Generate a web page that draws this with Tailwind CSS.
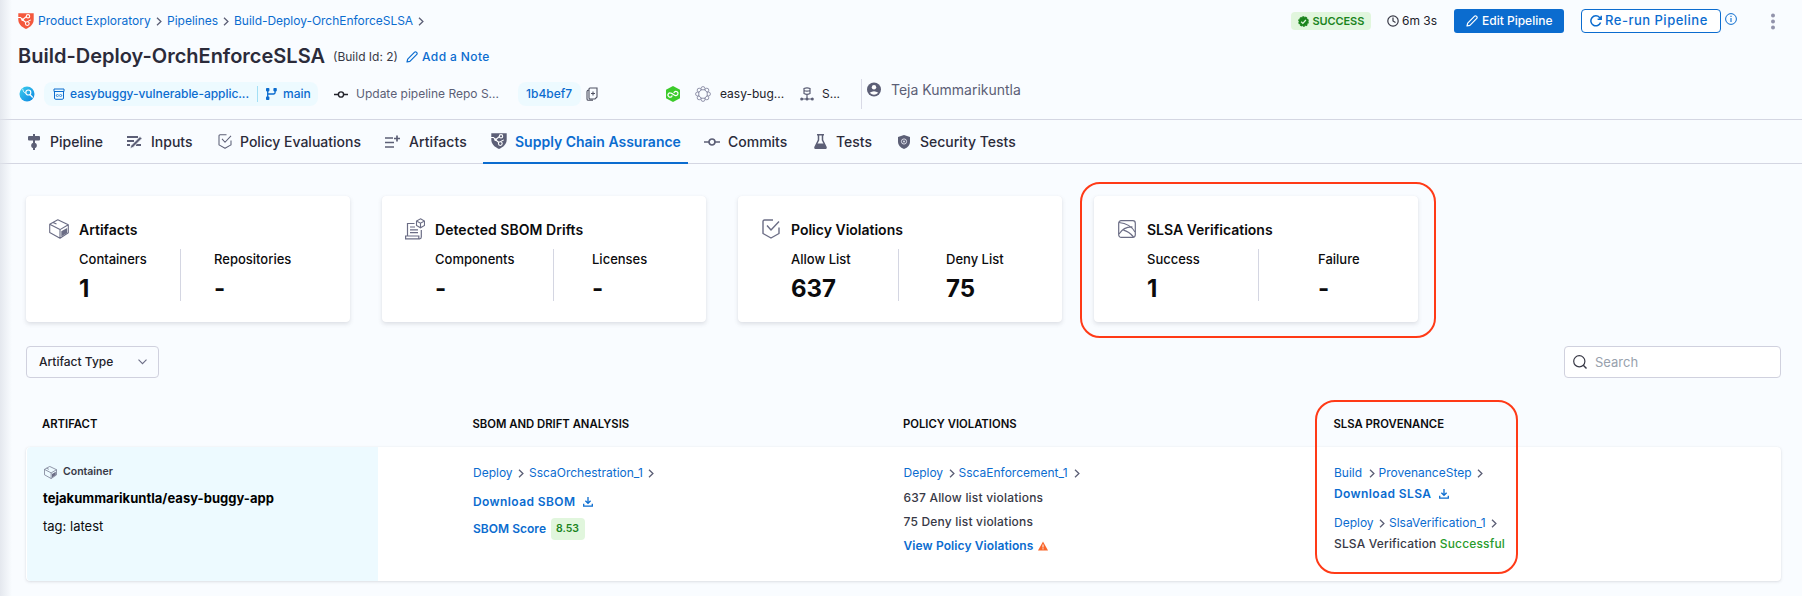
<!DOCTYPE html>
<html lang="en">
<head>
<meta charset="utf-8">
<title>Build-Deploy-OrchEnforceSLSA</title>
<script src="https://cdn.jsdelivr.net/npm/@tailwindcss/browser@4"></script>
</head>
<body class="relative h-[596px] w-[1802px] overflow-hidden bg-[#f9fcff] font-['Inter',sans-serif] text-[#0b0b0d] whitespace-nowrap">
<svg width="0" height="0" class="absolute">
  <defs>
    <symbol id="chev" viewBox="0 0 6 9"><path d="M1 .8l3.900 3.700L1 8.200" fill="none" stroke="#5c5f76" stroke-width="1.300"/></symbol>
    <symbol id="dl" viewBox="0 0 10 10"><path d="M5 0v6.200M2.400 3.800L5 6.400l2.600-2.600M.7 6.800v2.400h8.600V6.800" fill="none" stroke="#0b6ccf" stroke-width="1.300"/></symbol>
    <symbol id="pencil" viewBox="0 0 12 12"><path d="M1 11l.7-2.900L8.600 1.200a1.200 1.200 0 0 1 1.700 0l.5.5a1.200 1.200 0 0 1 0 1.700L3.900 10.300z" fill="none" stroke="currentColor" stroke-width="1.200" stroke-linejoin="round"/></symbol>
    <symbol id="shield" viewBox="0 0 16 16"><path d="M.3.3h15.400v6.200c0 4.600-3.400 7.700-7.700 9.400C3.700 14.200.3 11.100.3 6.500z" fill="currentColor"/><path d="M0 4.500h2.500l2 2.200 4-3.200M4.500 6.700l3.700 3" fill="none" stroke="#fff" stroke-width="1.100"/><circle cx="4.500" cy="6.700" r="1.200" fill="#fff"/><circle cx="10" cy="3.300" r="1.700" fill="currentColor" stroke="#fff" stroke-width="1.100"/><circle cx="9.300" cy="10.600" r="1.900" fill="currentColor" stroke="#fff" stroke-width="1.100"/><path d="M9.300 8.600l3.500-1.600" stroke="#fff" stroke-width="1"/></symbol>
    <symbol id="box" viewBox="0 0 20 20"><path d="M.7 5.200L8.800.7l10.500 5v8L11 19.300.7 13.500zM.7 5.200L11 10.600l8.300-4.900M11 10.600v8.700M4 3.400l3.500 1.700" fill="none" stroke="#6b6d85" stroke-width="1.100" stroke-linejoin="round"/><path d="M12.300 12.300l5.800-3.400v5l-5.800 3.700z" fill="#6b6d85"/></symbol>
    <symbol id="policy" viewBox="0 0 18 20"><path d="M11 1H2.500Q1 1 1 2.500V14.500L9 19l8-4.500V8.500M5 6.500l4 4.500 8-8.500" fill="none" stroke="currentColor" stroke-width="1.400" stroke-linejoin="round"/></symbol>
    <symbol id="commit" viewBox="0 0 16 8"><circle cx="8" cy="4" r="3" fill="none" stroke="currentColor" stroke-width="1.700"/><path d="M0 4h5M11 4h5" stroke="currentColor" stroke-width="1.700"/></symbol>
  </defs>
</svg>

<header class="h-[120px] border-b border-[#d4d6e2] pl-[18px]">
  <!-- breadcrumbs and actions -->
  <div class="flex h-[42px] items-center text-[12px] text-[#0b6ccf]">
    <svg class="h-4 w-4 text-[#f4583d]"><use href="#shield"/></svg>
    <span class="ml-1 w-[118px]">Product Exploratory</span>
    <svg class="h-[9px] w-[6px]"><use href="#chev"/></svg>
    <span class="ml-[5px] w-[56px]">Pipelines</span>
    <svg class="h-[9px] w-[6px]"><use href="#chev"/></svg>
    <span class="ml-[5px] w-[184px]"><span class="tracking-[-0.030px]">Build-Deploy-OrchEnforceSLSA</span></span>
    <svg class="h-[9px] w-[6px]"><use href="#chev"/></svg>
    <div class="ml-auto mr-[26px] flex items-center">
      <div class="flex h-[18px] w-[80px] items-center rounded bg-[#e1f6dd] pl-[7px] text-[11px] font-semibold text-[#1b841d]">
        <svg class="h-[11px] w-[11px]" viewBox="0 0 12 12"><circle cx="6" cy="6" r="5" fill="#1b841d" stroke="#1b841d" stroke-width="1.600" stroke-dasharray="2.200 .9"/><path d="M3.500 6.200l1.800 1.800 3.300-3.600" fill="none" stroke="#e1f6dd" stroke-width="1.400"/></svg>
        <span class="ml-1 tracking-[-0.100px]">SUCCESS</span>
      </div>
      <svg class="ml-4 h-3 w-3" viewBox="0 0 12 12"><circle cx="6" cy="6" r="5.200" fill="none" stroke="#383946" stroke-width="1.200"/><path d="M6 2.500V6l2.500 1.500" fill="none" stroke="#383946" stroke-width="1.200"/></svg>
      <span class="ml-[3.500px] w-[52px] text-[12px] text-[#22222a]">6m 3s</span>
      <div class="flex h-6 w-[110px] items-center rounded-[3px] bg-[#0b6ccf] pl-3 text-[12px] font-medium text-white">
        <svg class="h-3 w-3"><use href="#pencil"/></svg><span class="ml-1">Edit Pipeline</span>
      </div>
      <div class="ml-[17px] flex h-6 w-[140px] items-center rounded border border-[#0b6ccf] bg-white pl-2 text-[13px] font-medium tracking-[0.500px]">
        <svg class="h-3 w-3" viewBox="0 0 12 12"><path d="M10.600 7.500A5 5 0 1 1 9.600 2.500L11 4M11.200.7V4.300H7.600" fill="none" stroke="#0b6ccf" stroke-width="1.500"/></svg><span class="ml-[3px]">Re-run Pipeline</span>
      </div>
      <svg class="mb-1 ml-1 h-3 w-3" viewBox="0 0 12 12"><circle cx="6" cy="6" r="5.400" fill="none" stroke="#0b6ccf"/><path d="M6 5v4M6 2.800v1.200" stroke="#0b6ccf" stroke-width="1.100"/></svg>
      <svg class="ml-[33px] h-[17px] w-[6px]" viewBox="0 0 6 17"><g fill="#9293ab"><circle cx="3" cy="2.500" r="2"/><circle cx="3" cy="8.500" r="2"/><circle cx="3" cy="14.500" r="2"/></g></svg>
    </div>
  </div>
  <!-- title -->
  <div class="flex h-[28px] items-center">
    <h1 class="w-[315px] text-[20px] font-semibold text-[#2b2b3a]">Build-Deploy-OrchEnforceSLSA</h1>
    <span class="mt-[2px] w-[73px] text-[12px] text-[#383946]">(Build Id: 2)</span>
    <svg class="mt-[1px] h-3 w-3 text-[#0b6ccf]"><use href="#pencil"/></svg>
    <span class="mt-[2px] ml-1 text-[12px] font-medium tracking-[0.400px] text-[#0b6ccf]">Add a Note</span>
  </div>
  <!-- source, commit, deployment and user details -->
  <div class="flex h-[48px] items-center text-[12px]">
    <svg class="ml-[1px] h-4 w-4" viewBox="0 0 16 16"><defs><linearGradient id="ci" x1="0" y1="0" x2="1" y2="1"><stop stop-color="#3ed0ee"/><stop offset="1" stop-color="#0b83e0"/></linearGradient></defs><circle cx="8" cy="8" r="7.500" fill="url(#ci)"/><circle cx="9.300" cy="6.500" r="2.500" fill="none" stroke="#fff" stroke-width="1.200"/><path d="M11 8.500l2.700 3" fill="none" stroke="#fff" stroke-width="1.200"/><path d="M3.500 2.800Q4.500 7 6.800 7.500" fill="none" stroke="#d8f5fd" stroke-width=".9"/></svg>
    <div class="ml-[9px] flex h-6 w-[274px] items-center rounded-lg bg-[#edfaff] pl-[9px] font-medium text-[#0b6ccf]">
      <svg class="h-[12px] w-[12px]" viewBox="0 0 12 12"><path d="M1 1h10v2.500H1zM1.500 3.500V10q0 1.300 1.300 1.300h6.400q1.300 0 1.300-1.300V3.500M4.500 6L3.300 7.500 4.500 9M7.500 6l1.200 1.500L7.500 9M6 6.500v2" fill="none" stroke="#0b6ccf" stroke-width="1"/></svg>
      <span class="ml-[5px] w-[187px]"><span class="tracking-[-0.040px]">easybuggy-vulnerable-applic...</span></span>
      <i class="h-4 w-px bg-[#a3dff5]"></i>
      <svg class="ml-[8px] h-3 w-[11px]" viewBox="0 0 11 12"><g fill="#0b6ccf"><rect x="0" y="0" width="3.400" height="3.400" rx=".8"/><rect x="0" y="8.600" width="3.400" height="3.400" rx=".8"/><rect x="7.400" y="0" width="3.400" height="3.400" rx=".8"/></g><path d="M1.700 2v8M9.100 2v2.300q0 1.700-1.700 1.700H1.700" fill="none" stroke="#0b6ccf" stroke-width="1.300"/></svg>
      <span class="ml-[6px]">main</span>
    </div>
    <svg class="ml-[16px] h-[7px] w-[14px] text-[#22222a]"><use href="#commit"/></svg>
    <span class="ml-[8px] w-[162px] text-[#5c5f76]">Update pipeline Repo S...</span>
    <div class="flex h-6 w-[63px] items-center rounded-lg bg-[#edfaff] pl-2 font-medium text-[#0b6ccf]">1b4bef7</div>
    <svg class="ml-[5px] h-[14px] w-[12px]" viewBox="0 0 12 14"><path d="M4 1h7v9L9 12H4q-1 0-1-1V2q0-1 1-1zM3 3Q1 3 1 4.500V12q0 1.300 1.300 1.300H7M7 4.500v4M5 6.500h4" fill="none" stroke="#4f5162" stroke-width="1.100"/></svg>
    <svg class="ml-[67px] h-4 w-4" viewBox="0 0 16 16"><path d="M8 0l7 3.700v8.600L8 16l-7-3.700V3.700z" fill="#3ccb2b"/><path d="M7 9.300L6.300 10a2.100 2.100 0 1 1 0-3.200q.9.600 1.700 1.400 1 1 1.700 1.600a2.100 2.100 0 1 0 0-3.400L9 7" transform="rotate(-12 8 8)" fill="none" stroke="#fff" stroke-width="1.200"/></svg>
    <svg class="ml-[14px] h-4 w-4" viewBox="0 0 16 16"><g fill="#f9fcff" stroke="#8487a0" stroke-width=".9"><circle cx="8" cy="2.600" r="2"/><circle cx="11.800" cy="4.200" r="2"/><circle cx="13.400" cy="8" r="2"/><circle cx="11.800" cy="11.800" r="2"/><circle cx="8" cy="13.400" r="2"/><circle cx="4.200" cy="11.800" r="2"/><circle cx="2.600" cy="8" r="2"/><circle cx="4.200" cy="4.200" r="2"/><circle cx="8" cy="8" r="4.300"/></g></svg>
    <span class="ml-[9px] w-[80px] text-[#22222a]">easy-bug...</span>
    <svg class="h-[14px] w-[14px]" viewBox="0 0 14 14"><path d="M4 1.500q3-1.400 6 0v5q-3 1.600-6 0zM4 3.500q3 1.200 6 0M7 8v4M1 12h12" fill="none" stroke="#5c5f76" stroke-width="1.200"/><g fill="#5c5f76"><circle cx="1.700" cy="12" r="1.500"/><circle cx="7" cy="12" r="1.500"/><circle cx="12.300" cy="12" r="1.500"/></g></svg>
    <span class="ml-[8px] w-[39px] text-[#22222a]">S...</span>
    <div class="flex h-[30px] items-start border-l border-[#d9dae6] pl-[5px] pt-[3px]">
      <svg class="h-[15px] w-[14px]" viewBox="0 0 14 14"><circle cx="7" cy="7" r="7" fill="#5c5f76"/><circle cx="7" cy="4.800" r="2.200" fill="#fff"/><path d="M2.700 10.300q4.300-3.300 8.600 0Q7 14 2.700 10.300" fill="#fff"/></svg>
      <span class="ml-[10px] text-[14px] leading-4 text-[#5c5f76]">Teja Kummarikuntla</span>
    </div>
  </div>
</header>

<nav class="flex h-[44px] items-center border-b border-[#d4d6e2] pl-[28px] text-[14px] font-medium text-[#2b2b3a]">
  <svg class="h-4 w-3" viewBox="0 0 12 16"><path d="M1 2h10q1 0 1 1v2.500q0 1-1 1H1q-1 0-1-1V3q0-1 1-1zM5 0h2v10H5zM5 13h2v3H5z" fill="#5c5f76"/><circle cx="6" cy="11.500" r="2.800" fill="#5c5f76"/></svg>
  <span class="ml-[10px] w-[77px]">Pipeline</span>
  <svg class="h-[14px] w-4" viewBox="0 0 16 14"><path d="M0 2h11M0 6h7M0 10h3M9 10h5" stroke="#5c5f76" stroke-width="1.800"/><path d="M3 13.500l1-3L13 1.500l2 2L6 12.500z" fill="#5c5f76" stroke="#f9fcff" stroke-width=".8"/></svg>
  <span class="ml-[8px] w-[67px]">Inputs</span>
  <svg class="h-[15px] w-[14px] text-[#5c5f76]"><use href="#policy"/></svg>
  <span class="ml-[8px] w-[145px]">Policy Evaluations</span>
  <svg class="h-[14px] w-[15px]" viewBox="0 0 15 14"><path d="M0 3h8M0 7.500h9M0 12h9M12 .5v6M9 3.500h6" stroke="#5c5f76" stroke-width="1.700"/></svg>
  <span class="ml-[9px] w-[74px] tracking-[0.080px]">Artifacts</span>
  <div class="mt-[1px] flex h-[43px] w-[205px] items-center border-b-2 border-[#0b6ccf] pl-[8px] font-semibold text-[#0b6ccf]">
    <svg class="h-4 w-4 text-[#5c5f76]"><use href="#shield"/></svg><span class="ml-[8px]">Supply Chain Assurance</span>
  </div>
  <svg class="ml-[16px] h-2 w-4 text-[#5c5f76]"><use href="#commit"/></svg>
  <span class="ml-[8px] w-[86px]">Commits</span>
  <svg class="h-[15px] w-[13px]" viewBox="0 0 13 15"><path d="M3 .8h7M4.500 1v5L1 13.300Q.8 14.200 1.700 14.200h9.600q.9 0 .7-.9L8.500 6V1" fill="none" stroke="#5c5f76" stroke-width="1.500"/><path d="M3 9.500h7l2 4.500H1z" fill="#5c5f76"/></svg>
  <span class="ml-[9px] w-[62px]">Tests</span>
  <svg class="h-[14px] w-3" viewBox="0 0 12 14"><path d="M6 0l6 2v5q0 4.500-6 7Q0 11.500 0 7V2z" fill="#5c5f76"/><circle cx="6" cy="6.500" r="2.600" fill="none" stroke="#e6e8f2" stroke-width=".9"/><circle cx="6" cy="6.500" r=".9" fill="#e6e8f2"/></svg>
  <span class="ml-[10px]">Security Tests</span>
</nav>

<main class="px-[26px] pt-[32px]">
  <!-- summary cards -->
  <section class="flex gap-8">
    <div class="h-[126px] w-[324px] rounded bg-white pt-[22px] shadow-[0_0_1px_rgba(40,41,61,0.06),0_2px_4px_rgba(96,97,112,0.18)]">
      <div class="flex h-[22px] items-center pl-[23px]"><svg class="h-5 w-5"><use href="#box"/></svg><h2 class="ml-[10px] text-[14px] font-semibold">Artifacts</h2></div>
      <div class="mt-[9px] flex h-[52px] pl-[53px]">
        <div class="w-[101px] pt-[1px] text-[13px] font-medium">Containers<div class="mt-[2px] text-[24px] leading-[34px] font-bold">1</div></div>
        <div class="border-l border-[#d4d6e2] pl-[33px] pt-[1px] text-[13px] font-medium">Repositories<div class="mt-[2px] text-[24px] leading-[34px] font-bold">-</div></div>
      </div>
    </div>
    <div class="h-[126px] w-[324px] rounded bg-white pt-[22px] shadow-[0_0_1px_rgba(40,41,61,0.06),0_2px_4px_rgba(96,97,112,0.18)]">
      <div class="flex h-[22px] items-center pl-[23px]"><svg class="h-[22px] w-5" viewBox="0 0 20 22"><path d="M2.500 18V5.500h7M2.500 18H.6v2.800h13.200V18H2.500M16.300 12v7q0 1.800-1.700 1.800h-1M5 9h5M5 11.800h8M5 14.600h8" fill="none" stroke="#6b6d85" stroke-width="1.200"/><path d="M15.500.8l4 2.200v4.500l-4 2.300-4-2.300V3zM11.500 3l4 2.200 4-2.200M15.500 5.200v4.600" fill="none" stroke="#6b6d85" stroke-width="1.100"/></svg><h2 class="ml-[10px] text-[14px] font-semibold tracking-[0.040px]">Detected SBOM Drifts</h2></div>
      <div class="mt-[9px] flex h-[52px] pl-[53px]">
        <div class="w-[118px] pt-[1px] text-[13px] font-medium">Components<div class="mt-[2px] text-[24px] leading-[34px] font-bold">-</div></div>
        <div class="border-l border-[#d4d6e2] pl-[38px] pt-[1px] text-[13px] font-medium">Licenses<div class="mt-[2px] text-[24px] leading-[34px] font-bold">-</div></div>
      </div>
    </div>
    <div class="h-[126px] w-[324px] rounded bg-white pt-[22px] shadow-[0_0_1px_rgba(40,41,61,0.06),0_2px_4px_rgba(96,97,112,0.18)]">
      <div class="flex h-[22px] items-center pl-[24px]"><svg class="h-5 w-[18px] text-[#6b6d85]"><use href="#policy"/></svg><h2 class="ml-[11px] text-[14px] font-semibold">Policy Violations</h2></div>
      <div class="mt-[9px] flex h-[52px] pl-[53px]">
        <div class="w-[107px] pt-[1px] text-[13px] font-medium">Allow List<div class="mt-[2px] text-[24px] leading-[34px] font-bold">637</div></div>
        <div class="border-l border-[#d4d6e2] pl-[47px] pt-[1px] text-[13px] font-medium">Deny List<div class="mt-[2px] text-[24px] leading-[34px] font-bold">75</div></div>
      </div>
    </div>
    <div class="h-[126px] w-[324px] rounded bg-white pt-[22px] shadow-[0_0_1px_rgba(40,41,61,0.06),0_2px_4px_rgba(96,97,112,0.18)]">
      <div class="flex h-[22px] items-center pl-[24px]"><svg class="h-[18px] w-[18px]" viewBox="0 0 18 18"><rect x=".7" y=".7" width="16.600" height="16.600" rx="2.500" fill="none" stroke="#6b6d85" stroke-width="1.200"/><path d="M1 2.500Q12 3.500 17 12M1 14Q6 6.500 14.500 7M5.500 10.200Q11 11.500 15.500 17" fill="none" stroke="#6b6d85" stroke-width="1.200"/></svg><h2 class="ml-[11px] text-[14px] font-semibold">SLSA Verifications</h2></div>
      <div class="mt-[9px] flex h-[52px] pl-[53px]">
        <div class="w-[111px] pt-[1px] text-[13px] font-medium">Success<div class="mt-[2px] text-[24px] leading-[34px] font-bold">1</div></div>
        <div class="border-l border-[#d4d6e2] pl-[59px] pt-[1px] text-[13px] font-medium">Failure<div class="mt-[2px] text-[24px] leading-[34px] font-bold">-</div></div>
      </div>
    </div>
  </section>

  <!-- filters -->
  <section class="mt-6 flex w-[1755px] justify-between">
    <div class="flex h-8 w-[133px] items-center rounded border border-[#d0d1de] pl-3 text-[12px] font-medium text-[#22222a]">
      <span class="w-[99px]">Artifact Type</span>
      <svg class="h-[6px] w-[9px]" viewBox="0 0 9 6"><path d="M.5.7l4 4 4-4" fill="none" stroke="#6b6d85" stroke-width="1.100"/></svg>
    </div>
    <div class="flex h-8 w-[217px] items-center rounded border border-[#d0d1de] bg-white pl-2">
      <svg class="h-[14px] w-[14px]" viewBox="0 0 14 14"><circle cx="6.300" cy="6.300" r="5.600" fill="none" stroke="#383946" stroke-width="1.200"/><path d="M10.300 10.300l3.200 3.200" stroke="#383946" stroke-width="1.400"/></svg>
      <span class="mt-px ml-2 text-[13px] text-[#98a1ad]">Search</span>
    </div>
  </section>

  <!-- artifact table -->
  <section class="mt-[36px] w-[1755px]">
    <div class="flex h-[33px] items-start pl-4 text-[11.300px] leading-5 font-semibold">
      <span class="w-[430.500px]">ARTIFACT</span><span class="w-[430.500px]">SBOM AND DRIFT ANALYSIS</span><span class="w-[430.500px]">POLICY VIOLATIONS</span><span>SLSA PROVENANCE</span>
    </div>
    <div class="flex h-[134px] rounded bg-white pl-px text-[12px] leading-[20px] shadow-[0_0_1px_rgba(40,41,61,0.08),0_1px_3px_rgba(96,97,112,0.18)]">
      <div class="w-[351px] rounded-l bg-[#edfaff] pl-4 pt-[15px]">
        <div class="flex h-5 items-center text-[10.500px] font-semibold text-[#383946]"><svg class="ml-[1px] mr-[6px] h-[13px] w-[13px]"><use href="#box"/></svg>Container</div>
        <div class="mt-[6px] text-[13px] font-bold tracking-[0.030px] text-black">tejakummarikuntla/easy-buggy-app</div>
        <div class="mt-[8px] text-[13px]">tag: latest</div>
      </div>
      <div class="ml-[95px] w-[430.500px] pt-4 text-[#0b6ccf]">
        <div class="flex h-5 items-center"><span class="w-[45px]">Deploy</span><svg class="h-[9px] w-[6px]"><use href="#chev"/></svg><span class="ml-[5px] w-[119px]">SscaOrchestration_1</span><svg class="h-[9px] w-[6px]"><use href="#chev"/></svg></div>
        <div class="mt-[9px] flex h-5 items-center font-semibold tracking-[0.400px]">Download SBOM<svg class="ml-[8px] h-[10px] w-[10px]"><use href="#dl"/></svg></div>
        <div class="mt-[6px] flex h-[22px] items-center font-semibold"><span class="w-[77.500px] tracking-[0.030px]">SBOM Score</span><span class="flex h-[22px] w-[34px] items-center justify-center rounded bg-[#e1f6dd] text-[10.500px] text-[#1b841d]">8.53</span></div>
      </div>
      <div class="w-[430.500px] pt-4 text-[#0b6ccf]">
        <div class="flex h-5 items-center"><span class="w-[45px]">Deploy</span><svg class="h-[9px] w-[6px]"><use href="#chev"/></svg><span class="ml-[4px] w-[115px]">SscaEnforcement_1</span><svg class="h-[9px] w-[6px]"><use href="#chev"/></svg></div>
        <div class="mt-[5px] font-medium tracking-[0.200px] text-[#383946]">637 Allow list violations</div>
        <div class="mt-[4px] font-medium tracking-[0.200px] text-[#383946]">75 Deny list violations</div>
        <div class="mt-[4px] flex h-5 items-center font-semibold tracking-[0.100px]">View Policy Violations<svg class="ml-[4px] h-[10px] w-[10px]" viewBox="0 0 10 10"><path d="M5 .5l5 9H0z" fill="#f9662b"/><path d="M5 3.500v3M5 7.300v1.100" stroke="#fff"/></svg></div>
      </div>
      <div class="pt-4 text-[#0b6ccf]">
        <div class="flex h-5 items-center"><span class="w-[34.500px]">Build</span><svg class="h-[9px] w-[6px]"><use href="#chev"/></svg><span class="ml-[4px] w-[98px]">ProvenanceStep</span><svg class="h-[9px] w-[6px]"><use href="#chev"/></svg></div>
        <div class="mt-[1px] flex h-5 items-center font-semibold tracking-[0.400px]">Download SLSA<svg class="ml-[8px] h-[10px] w-[10px]"><use href="#dl"/></svg></div>
        <div class="mt-[9px] flex h-5 items-center"><span class="w-[45px]">Deploy</span><svg class="h-[9px] w-[6px]"><use href="#chev"/></svg><span class="ml-[4px] w-[102px]">SlsaVerification_1</span><svg class="h-[9px] w-[6px]"><use href="#chev"/></svg></div>
        <div class="mt-[1px] font-medium tracking-[0.160px] text-[#383946]">SLSA Verification <span class="text-[#299b2c]">Successful</span></div>
      </div>
    </div>
  </section>
</main>

<div class="pointer-events-none absolute inset-y-0 left-0 w-3 bg-gradient-to-r from-[#dfe3ea]/80 to-transparent"></div>
<div class="pointer-events-none absolute left-[1080px] top-[182px] h-[156px] w-[356px] rounded-[20px] border-2 border-[#ff3a17]"></div>
<div class="pointer-events-none absolute left-[1315px] top-[400px] h-[174px] w-[203px] rounded-[20px] border-2 border-[#ff3a17]"></div>
</body>
</html>
